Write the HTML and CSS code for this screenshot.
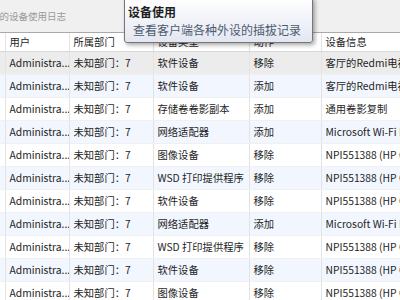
FILE: index.html
```html
<!DOCTYPE html>
<html lang="zh-CN">
<head>
    <meta charset="UTF-8">
    <title>设备使用日志</title>
    <link rel="stylesheet" href="styles.css">
</head>
<body>

    <div class="titlebar">
        <span class="title-text">客户端的设备使用日志</span>
    </div>

    <div class="tooltip">
        <div class="tip-title">设备使用</div>
        <div class="tip-desc">查看客户端各种外设的插拔记录</div>
    </div>

    <table id="logTable">
        <colgroup>
            <col class="col-mark">
            <col class="col-user">
            <col class="col-dept">
            <col class="col-type">
            <col class="col-action">
            <col class="col-info">
        </colgroup>
        <thead>
            <tr>
                <th></th>
                <th>用户</th>
                <th>所属部门</th>
                <th>设备类型</th>
                <th>动作</th>
                <th>设备信息</th>
            </tr>
        </thead>
        <tbody>
            <!-- rows are inserted by the script below -->
        </tbody>
    </table>

    <script>
        const logs = [
            ['软件设备', '移除', '客厅的Redmi电视'],
            ['软件设备', '添加', '客厅的Redmi电视'],
            ['存储卷卷影副本', '添加', '通用卷影复制'],
            ['网络适配器', '添加', 'Microsoft Wi-Fi Direct Virtual Adapter'],
            ['图像设备', '移除', 'NPI551388 (HP Color LaserJet)'],
            ['WSD 打印提供程序', '移除', 'NPI551388 (HP Color LaserJet)'],
            ['软件设备', '移除', 'NPI551388 (HP Color LaserJet)'],
            ['网络适配器', '添加', 'Microsoft Wi-Fi Direct Virtual Adapter'],
            ['WSD 打印提供程序', '移除', 'NPI551388 (HP Color LaserJet)'],
            ['软件设备', '移除', 'NPI551388 (HP Color LaserJet)'],
            ['图像设备', '移除', 'NPI551388 (HP Color LaserJet)']
        ];

        const tbody = document.querySelector('#logTable tbody');

        logs.forEach((row, index) => {
            const tr = document.createElement('tr');
            if (index === 0) tr.classList.add('selected');

            tr.innerHTML = `
                <td></td>
                <td class="user">Administra...</td>
                <td>未知部门：7</td>
                <td>${row[0]}</td>
                <td>${row[1]}</td>
                <td>${row[2]}</td>
            `;
            tbody.appendChild(tr);
        });
    </script>

</body>
</html>
```

FILE: styles.css
```css
body {
    margin: 0;
    width: 400px;
    height: 300px;
    overflow: hidden;
    position: relative;
    background: #ffffff;
    font-family: "Noto Sans CJK SC", sans-serif;
    font-size: 10.3px;
    color: #1e1e1e;
}

.titlebar {
    height: 32px;
    background-color: #f0f0f0;
    border-bottom: 1px solid #a9a9a9;
    display: flex;
    align-items: center;
    overflow: hidden;
}

.title-text {
    font-size: 9.5px;
    color: #9a9a9a;
    margin-left: -29px;
    white-space: nowrap;
}

/* hover tip over the header */
.tooltip {
    position: absolute;
    left: 124px;
    top: -3px;
    padding: 5px 11px 3px 3px;
    font-size: 12px;
    background: linear-gradient(#ffffff, #e3e7f2);
    border: 1px solid #767676;
    border-radius: 3px;
    box-shadow: 2px 2px 4px rgba(0, 0, 0, 0.35);
    z-index: 2;
    white-space: nowrap;
}

.tip-title {
    font-weight: bold;
    color: #1e1e1e;
    line-height: 17px;
}

.tip-desc {
    color: #4c5a6e;
    margin-top: 1px;
    padding-left: 5px;
    line-height: 18px;
}

table {
    width: 461px;
    table-layout: fixed;
    border-collapse: collapse;
}

.col-mark { width: 5px; }
.col-user { width: 64px; }
.col-dept { width: 84px; }
.col-type { width: 96px; }
.col-action { width: 72px; }
.col-info { width: 140px; }

th, td {
    height: 22px;
    line-height: 22px;
    padding: 0 4px;
    text-align: left;
    font-weight: normal;
    white-space: nowrap;
    overflow: hidden;
    border-right: 1px solid #e3e3e3;
    border-bottom: 1px solid #f0f0f0;
}

th {
    height: 18px;
    line-height: 18px;
    border-bottom: 1px solid #d8d8d8;
}

td.user {
    padding-right: 0;
}

tbody tr:nth-child(even) {
    background-color: #f2f7ff;
}

tbody tr.selected {
    background-color: #ececec;
}
```
